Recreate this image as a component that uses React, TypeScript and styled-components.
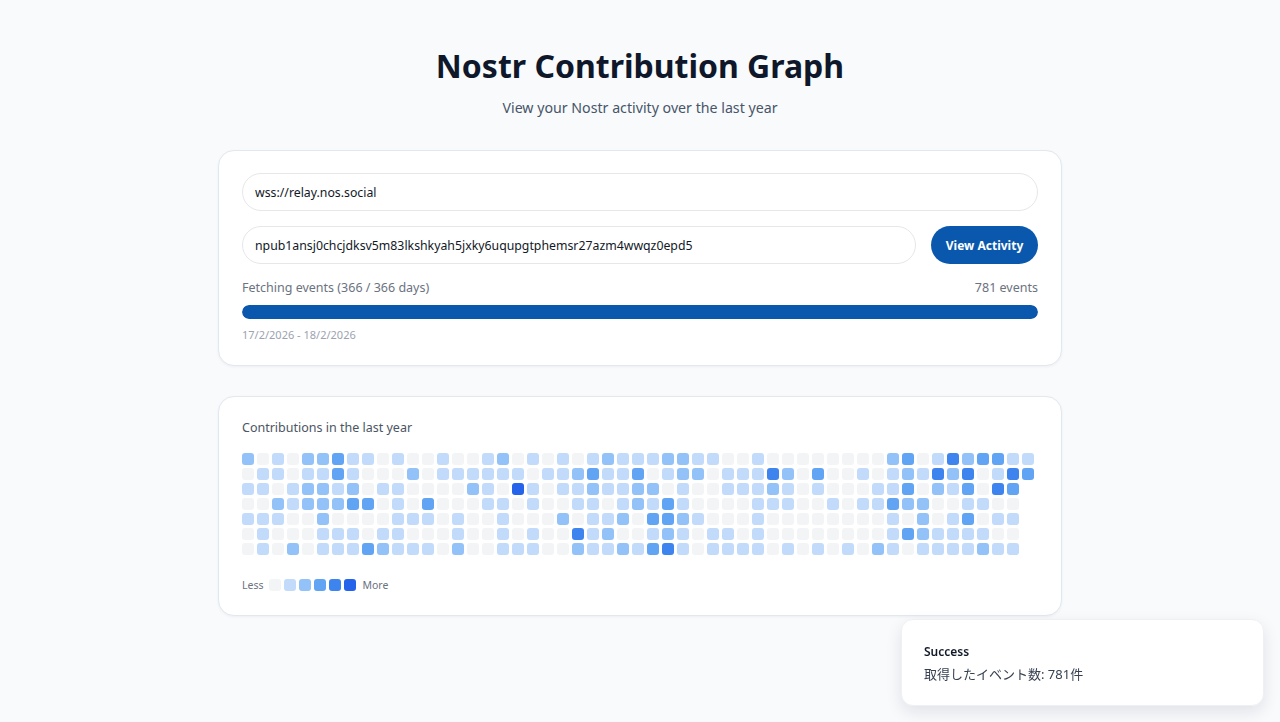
import React from 'react';
import styled, { createGlobalStyle } from 'styled-components';

// activity levels, one string per weekday row, one char per week column
const ROWS = [
  '20102231101001' + '00120101012111' + '22110010000000' + '02301423311',
  '01101131000201' + '11111011231130' + '12201114203001' + '01214240143',
  '11012212011000' + '02105101121122' + '01001112101000' + '1130213043',
  '00212223301030' + '00110100110121' + '31000011100101' + '1322001100',
  '11100200001110' + '10010002011203' + '32100010000000' + '0102013011',
  '01000111011000' + '10010100412001' + '21011010000000' + '0132111100',
  '01020111321110' + '20011100211213' + '41011110101010' + '2101111211',
];

const LEVEL_COLORS = ['#f2f4f6', '#c2dbfb', '#93c2f8', '#62a4f4', '#3d84ee', '#2563eb'];

const App: React.FC = () => {
  const weeks = ROWS[0].length;

  return (
    <Page>
      <GlobalStyle />
      <Title>Nostr Contribution Graph</Title>
      <Subtitle>View your Nostr activity over the last year</Subtitle>

      <Card>
        <TextInput defaultValue="wss://relay.nos.social" />
        <InputRow>
          <NpubInput defaultValue="npub1ansj0chcjdksv5m83lkshkyah5jxky6uqupgtphemsr27azm4wwqz0epd5" />
          <PrimaryButton>View Activity</PrimaryButton>
        </InputRow>
        <ProgressInfo>
          <span>Fetching events (366 / 366 days)</span>
          <span>781 events</span>
        </ProgressInfo>
        <ProgressTrack>
          <ProgressFill style={{ width: '100%' }} />
        </ProgressTrack>
        <DateRange>17/2/2026 - 18/2/2026</DateRange>
      </Card>

      <Card>
        <SectionLabel>Contributions in the last year</SectionLabel>
        <Grid>
          {Array.from({ length: weeks }).map((_, w) => (
            <WeekColumn key={w}>
              {ROWS.map((row, d) =>
                w < row.length ? <Cell key={d} $level={Number(row[w])} /> : null
              )}
            </WeekColumn>
          ))}
        </Grid>
        <Legend>
          <span>Less</span>
          <LegendCells>
            {LEVEL_COLORS.map((_, i) => (
              <Cell key={i} $level={i} />
            ))}
          </LegendCells>
          <span>More</span>
        </Legend>
      </Card>

      <Toast>
        <ToastTitle>Success</ToastTitle>
        <ToastBody>取得したイベント数: 781件</ToastBody>
      </Toast>
    </Page>
  );
};

const GlobalStyle = createGlobalStyle`
  html, body {
    margin: 0;
    padding: 0;
    background: #f8fafc;
  }
  body {
    font-family: "Noto Sans", "Noto Sans CJK JP", sans-serif;
    color: #111827;
  }
`;

const Page = styled.div`
  display: flex;
  flex-direction: column;
  align-items: center;
  padding-top: 44px;
  min-height: 722px;
  box-sizing: border-box;
`;

const Title = styled.h1`
  margin: 0;
  font-size: 32px;
  line-height: 43px;
  font-weight: 700;
  color: #0f172a;
`;

const Subtitle = styled.p`
  margin: 10px 0 0;
  font-size: 14.2px;
  line-height: 22px;
  color: #475569;
`;

const Card = styled.div`
  width: 844px;
  box-sizing: border-box;
  margin-top: 31px;
  padding: 22px 23px;
  background: #ffffff;
  border: 1px solid #e2e8f0;
  border-radius: 16px;
  box-shadow: 0 1px 3px rgba(15, 23, 42, 0.05);
  display: flex;
  flex-direction: column;

  & + & {
    margin-top: 30px;
  }
`;

const TextInput = styled.input`
  width: 100%;
  height: 38px;
  box-sizing: border-box;
  padding: 0 12px;
  border: 1px solid #e5e7eb;
  border-radius: 19px;
  background: #fff;
  font-family: inherit;
  font-size: 12.3px;
  color: #111827;
  outline: none;
`;

const NpubInput = styled(TextInput)`
  flex: 1;
  min-width: 0;
`;

const InputRow = styled.div`
  display: flex;
  gap: 15px;
  margin-top: 15px;
`;

const PrimaryButton = styled.button`
  flex: none;
  width: 107px;
  height: 38px;
  border: none;
  border-radius: 19px;
  background: #0a58ad;
  color: #fff;
  font-family: inherit;
  font-size: 12px;
  font-weight: 700;
  cursor: pointer;
`;

const ProgressInfo = styled.div`
  display: flex;
  justify-content: space-between;
  margin-top: 15px;
  font-size: 12.5px;
  line-height: 18px;
  color: #6b7280;
`;

const ProgressTrack = styled.div`
  margin-top: 8px;
  height: 14px;
  border-radius: 7px;
  background: #e5e7eb;
  overflow: hidden;
`;

const ProgressFill = styled.div`
  height: 100%;
  background: #0a58ad;
  border-radius: 7px;
`;

const DateRange = styled.div`
  margin-top: 8px;
  font-size: 11px;
  line-height: 16px;
  color: #9ca3af;
`;

const SectionLabel = styled.div`
  font-size: 12.5px;
  line-height: 18px;
  color: #4b5563;
`;

const Grid = styled.div`
  display: flex;
  gap: 3px;
  margin-top: 16px;
`;

const WeekColumn = styled.div`
  display: flex;
  flex-direction: column;
  gap: 3px;
`;

const Cell = styled.div<{ $level: number }>`
  width: 12px;
  height: 12px;
  border-radius: 3px;
  background: ${(p) => LEVEL_COLORS[p.$level]};
`;

const Legend = styled.div`
  display: flex;
  align-items: center;
  gap: 6px;
  margin-top: 22px;
  font-size: 10.5px;
  line-height: 16px;
  color: #6b7280;
`;

const LegendCells = styled.div`
  display: flex;
  gap: 3px;
`;

const Toast = styled.div`
  position: fixed;
  right: 16px;
  bottom: 16px;
  width: 363px;
  box-sizing: border-box;
  padding: 23px 22px 21px;
  background: #fff;
  border: 1px solid #eef0f3;
  border-radius: 12px;
  box-shadow: 0 6px 16px rgba(15, 23, 42, 0.1);
`;

const ToastTitle = styled.div`
  font-size: 12px;
  line-height: 18px;
  font-weight: 600;
  color: #111827;
`;

const ToastBody = styled.div`
  margin-top: 3px;
  font-size: 13px;
  line-height: 20px;
  color: #374151;
`;

export default App;
